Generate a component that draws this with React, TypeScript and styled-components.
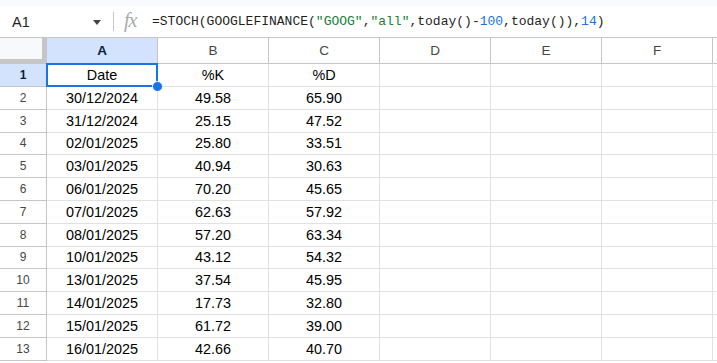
import React from 'react'
import styled, { createGlobalStyle } from 'styled-components'

const colors = {
  text: '#1f1f1f',
  muted: '#444746',
  headerBorder: '#c4c7c5',
  grid: '#e1e1e1',
  selectBg: '#d3e3fd',
  selectBorder: '#1a73e8',
  green: '#188038',
  blue: '#1a73e8',
}

const GlobalStyle = createGlobalStyle`
  html, body {
    margin: 0;
    padding: 0;
    background: #ffffff;
    overflow: hidden;
  }
  body {
    font-family: "Liberation Sans", Arial, sans-serif;
    color: ${colors.text};
  }
`

const Page = styled.div`
  width: 717px;
  height: 363px;
  overflow: hidden;
  background: #ffffff;
`

const TopStrip = styled.div`
  height: 6px;
  background: #f8fafd;
`

const FormulaBar = styled.div`
  display: flex;
  align-items: center;
  height: 32px;
  border-bottom: 1px solid ${colors.headerBorder};
  box-sizing: border-box;
`

const NameBox = styled.div`
  display: flex;
  align-items: center;
  justify-content: space-between;
  width: 101px;
  padding-left: 12px;
  box-sizing: border-box;
  font-size: 14.5px;
  color: ${colors.text};
`

const Caret = styled.span`
  width: 0;
  height: 0;
  border-left: 4.5px solid transparent;
  border-right: 4.5px solid transparent;
  border-top: 5px solid #444746;
  margin-top: 2px;
`

const Divider = styled.span`
  width: 1px;
  height: 19px;
  margin: 0 10px 0 12px;
  background: ${colors.headerBorder};
`

const FxIcon = styled.span`
  font-family: "Liberation Serif", "Times New Roman", serif;
  font-style: italic;
  font-size: 20px;
  color: #a8abad;
  letter-spacing: -1px;
  width: 28px;
  margin-top: -2px;
`

const Formula = styled.div`
  font-family: "Liberation Mono", "Courier New", monospace;
  font-size: 13px;
  white-space: nowrap;
  color: ${colors.text};
`

const Token = styled.span<{ $tone: 'green' | 'blue' }>`
  color: ${({ $tone }) => ($tone === 'green' ? colors.green : colors.blue)};
`

const Grid = styled.div`
  display: flex;
  flex-direction: column;
`

const HeaderRow = styled.div`
  display: flex;
  height: 26px;
`

const Corner = styled.div`
  width: 47px;
  flex-shrink: 0;
  box-sizing: border-box;
  background: #f8f9fa;
  border-right: 5px solid #c6c6c6;
  border-bottom: 5px solid #c6c6c6;
`

const ColHeader = styled.div<{ $active?: boolean }>`
  width: 111px;
  flex-shrink: 0;
  box-sizing: border-box;
  display: flex;
  align-items: center;
  justify-content: center;
  border-right: 1px solid ${colors.headerBorder};
  border-bottom: 1px solid ${colors.headerBorder};
  background: ${({ $active }) => ($active ? colors.selectBg : '#ffffff')};
  font-size: 13.5px;
  font-weight: ${({ $active }) => ($active ? 700 : 400)};
  color: ${({ $active }) => ($active ? '#0b1f3f' : colors.muted)};
`

const Row = styled.div<{ $first?: boolean }>`
  display: flex;
  height: ${({ $first }) => ($first ? '23px' : '22.8px')};
`

const RowHeader = styled.div<{ $active?: boolean }>`
  width: 47px;
  flex-shrink: 0;
  box-sizing: border-box;
  display: flex;
  align-items: center;
  justify-content: center;
  border-right: 1px solid ${colors.headerBorder};
  border-bottom: 1px solid ${colors.headerBorder};
  background: ${({ $active }) => ($active ? colors.selectBg : '#ffffff')};
  font-size: 12px;
  font-weight: ${({ $active }) => ($active ? 700 : 400)};
  color: ${({ $active }) => ($active ? '#0b1f3f' : colors.muted)};
`

const Cell = styled.div`
  position: relative;
  width: 111px;
  flex-shrink: 0;
  box-sizing: border-box;
  display: flex;
  align-items: center;
  justify-content: center;
  border-right: 1px solid ${colors.grid};
  border-bottom: 1px solid ${colors.grid};
  font-size: 14.4px;
  color: #000000;
`

const Selection = styled.div`
  position: absolute;
  left: -1px;
  top: -1px;
  right: -1px;
  bottom: -1px;
  border: 2px solid ${colors.selectBorder};
  pointer-events: none;
`

const FillHandle = styled.span`
  position: absolute;
  right: -6px;
  bottom: -6px;
  width: 9px;
  height: 9px;
  border-radius: 50%;
  background: ${colors.selectBorder};
  border: 1px solid #ffffff;
  z-index: 2;
`

const columns = ['A', 'B', 'C', 'D', 'E', 'F', '']

const data: [string, string, string][] = [
  ['30/12/2024', '49.58', '65.90'],
  ['31/12/2024', '25.15', '47.52'],
  ['02/01/2025', '25.80', '33.51'],
  ['03/01/2025', '40.94', '30.63'],
  ['06/01/2025', '70.20', '45.65'],
  ['07/01/2025', '62.63', '57.92'],
  ['08/01/2025', '57.20', '63.34'],
  ['10/01/2025', '43.12', '54.32'],
  ['13/01/2025', '37.54', '45.95'],
  ['14/01/2025', '17.73', '32.80'],
  ['15/01/2025', '61.72', '39.00'],
  ['16/01/2025', '42.66', '40.70'],
]

const EmptyCells = ({ count }: { count: number }) => (
  <>
    {Array.from({ length: count }).map((_, i) => (
      <Cell key={i} />
    ))}
  </>
)

export default function App() {
  return (
    <Page>
      <GlobalStyle />
      <TopStrip />
      <FormulaBar>
        <NameBox>
          A1
          <Caret />
        </NameBox>
        <Divider />
        <FxIcon>fx</FxIcon>
        <Formula>
          =STOCH(GOOGLEFINANCE(<Token $tone="green">"GOOG"</Token>,<Token $tone="green">"all"</Token>
          ,today()-<Token $tone="blue">100</Token>,today()),<Token $tone="blue">14</Token>)
        </Formula>
      </FormulaBar>

      <Grid>
        <HeaderRow>
          <Corner />
          {columns.map((col) => (
            <ColHeader key={col || 'G'} $active={col === 'A'}>
              {col}
            </ColHeader>
          ))}
        </HeaderRow>

        <Row $first>
          <RowHeader $active>1</RowHeader>
          <Cell>
            Date
            <Selection />
            <FillHandle />
          </Cell>
          <Cell>%K</Cell>
          <Cell>%D</Cell>
          <EmptyCells count={4} />
        </Row>

        {data.map(([date, k, d], i) => (
          <Row key={date}>
            <RowHeader>{i + 2}</RowHeader>
            <Cell>{date}</Cell>
            <Cell>{k}</Cell>
            <Cell>{d}</Cell>
            <EmptyCells count={4} />
          </Row>
        ))}
      </Grid>
    </Page>
  )
}
